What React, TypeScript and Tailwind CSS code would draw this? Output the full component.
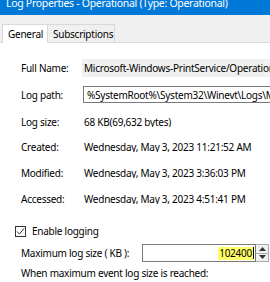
import React from "react";

const Row = ({ label, children, h }: { label: string; children: React.ReactNode; h: number }) => (
  <div className="flex items-center" style={{ height: h }}>
    <div className="w-[61px] shrink-0">{label}</div>
    <div className="flex-1 min-w-0 whitespace-nowrap overflow-hidden">{children}</div>
  </div>
);

export default function App() {
  return (
    <div
      className="w-[270px] h-[282px] overflow-hidden bg-white text-[10px] tracking-[-0.25px] text-black leading-none"
      style={{ fontFamily: '"Noto Sans", "Open Sans", sans-serif' }}
    >
      <div className="h-[15px] bg-[#0078d7] overflow-hidden">
        <div className="mt-[-4px] pl-[6px] text-white text-[10.5px] tracking-[-0.3px] leading-[14px] whitespace-nowrap">
          Log Properties - Operational (Type: Operational)
        </div>
      </div>
      <div className="h-[28px] bg-[#f0f0f0] flex items-end pl-[2px] border-b border-[#d9d9d9]">
        <div className="h-[19px] w-[45px] pl-[5px] bg-white border border-b-0 border-[#d9d9d9] border-r-0 flex items-center mb-[-1px]">
          General
        </div>
        <div className="h-[18px] w-[68px] pl-[5px] bg-[#f0f0f0] border border-b-0 border-[#d9d9d9] flex items-center">
          Subscriptions
        </div>
      </div>
      <div className="pl-[21px] pt-[16px]">
        <Row label="Full Name:" h={18}>
          <div className="bg-[#f0f0f0] h-[18px] flex items-center pl-[2px]">
            Microsoft-Windows-PrintService/Operational
          </div>
        </Row>
        <div className="h-[9px]" />
        <Row label="Log path:" h={17}>
          <div className="border border-[#7a7a7a] border-r-0 h-[17px] flex items-center pl-[3px] ml-[1px]">
            %SystemRoot%\System32\Winevt\Logs\Microsoft-Windows-PrintService%4Operational.evtx
          </div>
        </Row>
        <div className="h-[7px]" />
        <Row label="Log size:" h={24}>
          <div className="pl-[2px]">68 KB(69,632 bytes)</div>
        </Row>
        <Row label="Created:" h={26}>
          <div className="pl-[2px]">Wednesday, May 3, 2023 11:21:52 AM</div>
        </Row>
        <Row label="Modified:" h={26}>
          <div className="pl-[2px]">Wednesday, May 3, 2023 3:36:03 PM</div>
        </Row>
        <Row label="Accessed:" h={26}>
          <div className="pl-[2px]">Wednesday, May 3, 2023 4:51:41 PM</div>
        </Row>
        <div className="h-[18px] flex items-center ml-[-6px] mt-[10px]">
          <div className="w-[11px] h-[11px] border border-[#333] flex items-center justify-center mr-[6px] bg-white">
            <svg width="9" height="9" viewBox="0 0 9 9">
              <path d="M1 4.5 L3.5 7 L8 1.5" fill="none" stroke="#333" strokeWidth="1" />
            </svg>
          </div>
          <span>Enable logging</span>
        </div>
        <div className="flex items-center h-[18px] mt-[4px]">
          <div className="w-[121px] shrink-0 whitespace-nowrap">Maximum log size ( KB ):</div>
          <div className="w-[114px] h-[18px] border border-[#7a7a7a] flex items-center justify-end pr-[1px]">
            <span className="bg-[#ffff66] h-[13px] flex items-center pl-[1px] pr-[1px]">102400</span>
            <span className="w-px h-[12px] bg-black" />
          </div>
          <div className="w-[13px] h-[18px] flex flex-col border border-l-0 border-[#aaa]">
            <div className="flex-1 flex items-center justify-center border-b border-[#aaa] bg-[#f0f0f0]">
              <svg width="7" height="4" viewBox="0 0 7 4"><path d="M0 4 L3.5 0 L7 4Z" fill="#333" /></svg>
            </div>
            <div className="flex-1 flex items-center justify-center bg-[#f0f0f0]">
              <svg width="7" height="4" viewBox="0 0 7 4"><path d="M0 0 L3.5 4 L7 0Z" fill="#333" /></svg>
            </div>
          </div>
        </div>
        <div className="mt-[2px] h-[18px] flex items-center whitespace-nowrap">When maximum event log size is reached:</div>
      </div>
    </div>
  );
}
